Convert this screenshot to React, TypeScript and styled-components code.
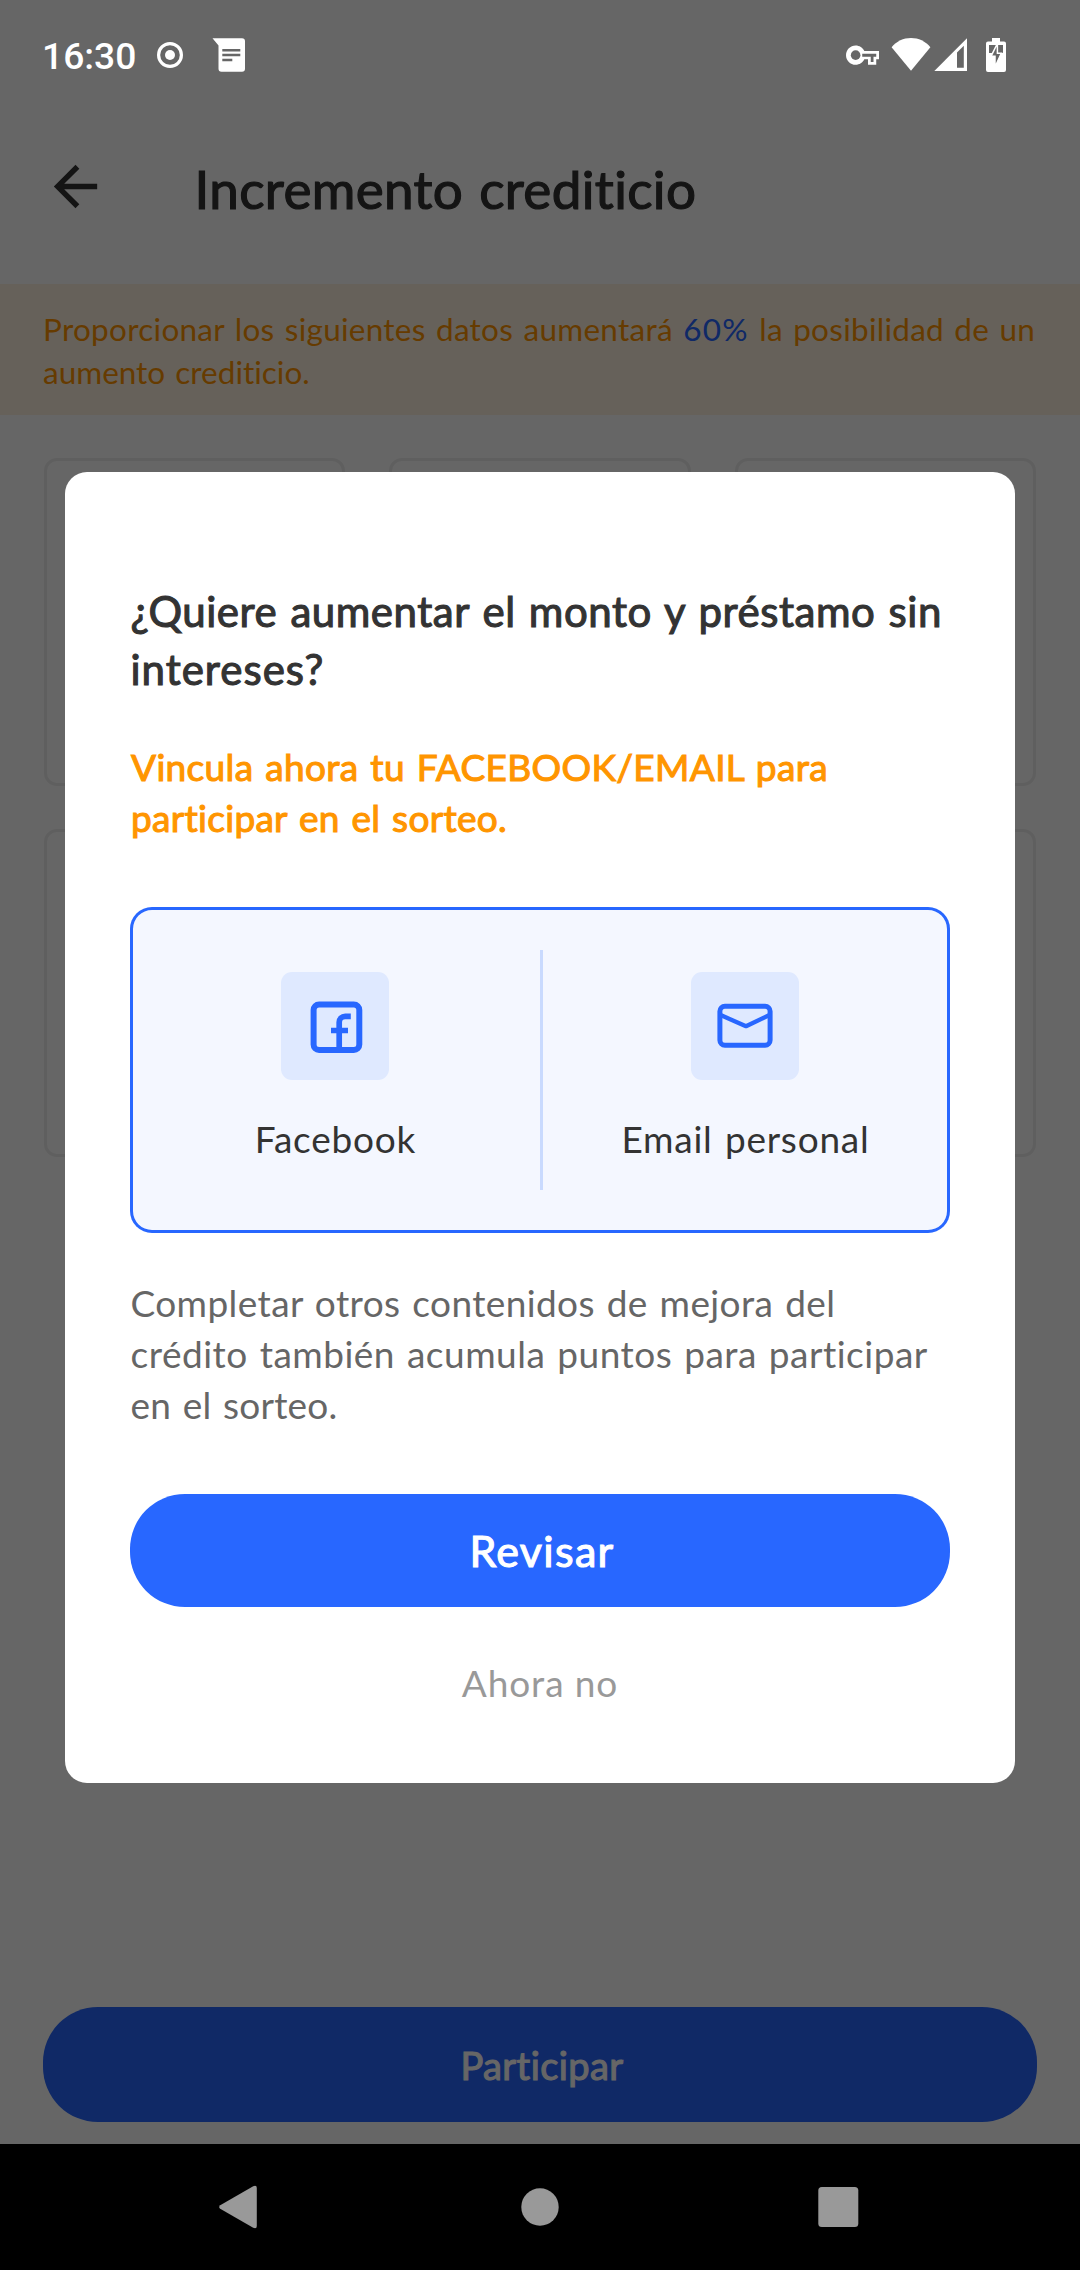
import React from "react";
import styled, { createGlobalStyle } from "styled-components";

const color = {
  ink: "#333333",
  body: "#666666",
  muted: "#999999",
  blue: "#2867ff",
  orange: "#ff9500",
  banner: "#fff3e2",
  line: "#eeeeee",
  panel: "#f4f7ff",
  tile: "#dfe9ff",
  divider: "#c9dafe",
  dim: "#666666",
};

const GlobalStyle = createGlobalStyle`
  * { box-sizing: border-box; }
  body { margin: 0; background: #000; }
  button { border: 0; padding: 0; font: inherit; }
`;

const Phone = styled.div`
  position: relative;
  display: flex;
  flex-direction: column;
  width: 1080px;
  height: 2270px;
  overflow: hidden;
  background: #fff;
  font-family: Lato, "Noto Sans", sans-serif;
  font-variant-ligatures: none;
  word-spacing: 2px;
`;

const Header = styled.header`
  display: flex;
  align-items: center;
  height: 191px;
  margin-top: 93px;
  padding-left: 43px;
`;

const BackIcon = styled.svg`
  width: 65px;
  height: 65px;
  margin: 0 86.5px 4px 0;
  fill: ${color.ink};
`;

const ScreenTitle = styled.h1`
  margin: 0;
  font-size: 53px;
  line-height: 64px;
  font-weight: 400;
  letter-spacing: 0.35px;
  color: ${color.ink};
  -webkit-text-stroke: 1.2px currentColor;
`;

const Banner = styled.div`
  height: 131px;
  padding: 24px 0 0 43px;
  background: ${color.banner};
  color: ${color.orange};
  font-size: 31.5px;
  line-height: 43px;
`;

const Line = styled.span<{ $track: number }>`
  display: block;
  white-space: nowrap;
  letter-spacing: ${(p) => p.$track}px;
`;

const Rate = styled.span`
  letter-spacing: 1.3px;
  color: ${color.blue};
`;

const CardGrid = styled.div`
  display: grid;
  grid-template-columns: repeat(3, 1fr);
  grid-auto-rows: 328px;
  gap: 43px 44px;
  padding: 43px 44px 0;
`;

const Card = styled.div`
  border: 3px solid ${color.line};
  border-radius: 13px;
`;

const PillButton = styled.button<{ $height: number; $size: number; $track: number }>`
  display: flex;
  align-items: center;
  justify-content: center;
  width: 100%;
  height: ${(p) => p.$height}px;
  padding: 1px 0 0 4px;
  border-radius: 55px;
  background: ${color.blue};
  color: #fff;
  font-size: ${(p) => p.$size}px;
  letter-spacing: ${(p) => p.$track}px;
  -webkit-text-stroke: 1.1px currentColor;
`;

const Footer = styled.footer`
  margin-top: auto;
  padding: 0 43px 22px;
`;

const NavBar = styled.nav`
  display: grid;
  grid-template-columns: repeat(3, 1fr);
  place-items: center;
  height: 126px;
  padding: 0 92px;
  background: #000;
`;

const NavIcon = styled.svg`
  width: 48px;
  height: 48px;
  fill: ${color.muted};
`;

const Scrim = styled.div`
  position: absolute;
  inset: 0 0 126px 0;
  padding: 472px 65px 0;
  background: rgba(0, 0, 0, 0.6);
`;

const StatusBar = styled.div`
  position: absolute;
  inset: 0 0 auto 0;
  display: flex;
  align-items: center;
  height: 110px;
  padding: 0 74px 0 42px;
`;

const Clock = styled.span`
  width: 113px;
  padding-top: 1px;
  font-family: Roboto, sans-serif;
  font-weight: 500;
  font-size: 37.2px;
  line-height: 44px;
  color: #fff;
`;

const StatusIcon = styled.svg<{ $w: number; $gap?: number }>`
  flex: none;
  width: ${(p) => p.$w}px;
  height: 36px;
  margin-left: ${(p) => p.$gap ?? 0}px;
  fill: #fff;
`;

const Spacer = styled.span`
  flex: 1;
`;

const Dialog = styled.section`
  display: flex;
  flex-direction: column;
  height: 1311px;
  padding: 110px 65px 0;
  border-radius: 22px;
  background: #fff;
`;

const Question = styled.h2`
  margin: 0;
  padding-left: 0.5px;
  font-size: 42px;
  line-height: 58px;
  font-weight: 400;
  color: ${color.ink};
  -webkit-text-stroke: 1.1px currentColor;
`;

const Highlight = styled.p`
  margin: 43px 0 0;
  padding-left: 1px;
  font-size: 37px;
  line-height: 51.3px;
  color: ${color.orange};
  -webkit-text-stroke: 1.1px currentColor;
`;

const Choices = styled.div`
  display: flex;
  height: 326px;
  margin-top: 63.4px;
  border-radius: 22px;
  background: ${color.panel};
  box-shadow: inset 0 0 0 3px ${color.blue};
`;

const Choice = styled.div`
  flex: 1;
  display: flex;
  flex-direction: column;
  align-items: center;
  padding-top: 65px;
`;

const Divider = styled.span`
  width: 3px;
  height: 240px;
  margin: 43px -3px 0 0;
  background: ${color.divider};
`;

const Tile = styled.svg`
  width: 108px;
  height: 108px;
  border-radius: 11px;
  background: ${color.tile};
  fill: none;
  stroke: ${color.blue};
`;

const ChoiceLabel = styled.span`
  margin-top: 33px;
  padding-left: 1px;
  font-size: 37px;
  line-height: 51px;
  letter-spacing: 0.78px;
  color: ${color.ink};
`;

const Note = styled.p`
  margin: 44px 0 63.4px;
  padding-left: 0.5px;
  font-size: 37px;
  line-height: 51.2px;
  color: ${color.body};
`;

const Dismiss = styled.button`
  margin-top: 50px;
  background: none;
  font-size: 37px;
  line-height: 51px;
  letter-spacing: 0.9px;
  color: ${color.muted};
`;

export default function App() {
  return (
    <>
      <GlobalStyle />
      <Phone>
        <Header>
          <BackIcon viewBox="0 0 24 24">
            <path d="M20 11H7.83l5.59-5.59L12 4l-8 8 8 8 1.41-1.41L7.83 13H20z" />
          </BackIcon>
          <ScreenTitle>Incremento crediticio</ScreenTitle>
        </Header>
        <Banner>
          <Line $track={0.27}>
            Proporcionar los siguientes datos aumentará <Rate>60%</Rate> la posibilidad de un
          </Line>
          <Line $track={0}>aumento crediticio.</Line>
        </Banner>
        <CardGrid>
          {[0, 1, 2, 3, 4, 5].map((n) => (
            <Card key={n} />
          ))}
        </CardGrid>
        <Footer>
          <PillButton $height={115} $size={38} $track={0.42}>
            Participar
          </PillButton>
        </Footer>
        <NavBar>
          <NavIcon viewBox="0 0 48 48">
            <path d="M3.2 22.2 36.2 3.2Q39.8 1.8 39.8 5V43Q39.8 46.2 36.2 44.8L3.2 25.8Q1.2 24 3.2 22.2Z" />
          </NavIcon>
          <NavIcon viewBox="0 0 48 48">
            <circle cx="24" cy="24" r="18.7" />
          </NavIcon>
          <NavIcon viewBox="0 0 48 48">
            <rect x="3.3" y="4" width="40" height="40" rx="3.5" />
          </NavIcon>
        </NavBar>

        <Scrim>
          <Dialog>
            <Question>
              <Line $track={0.53}>¿Quiere aumentar el monto y préstamo sin</Line>
              <Line $track={1}>intereses?</Line>
            </Question>
            <Highlight>
              <Line $track={0.34}>Vincula ahora tu FACEBOOK/EMAIL para</Line>
              <Line $track={0.3}>participar en el sorteo.</Line>
            </Highlight>
            <Choices>
              <Choice>
                <Tile viewBox="0 0 108 108">
                  <rect x="32.6" y="32.4" width="45.7" height="45.7" rx="5.5" strokeWidth="6" />
                  <path d="M58.2 78V50.3a6 6 0 0 1 6-6h5.6M50 58.5h17" strokeWidth="5.7" />
                </Tile>
                <ChoiceLabel>Facebook</ChoiceLabel>
              </Choice>
              <Divider />
              <Choice>
                <Tile viewBox="0 0 108 108">
                  <rect x="28.9" y="34.2" width="50.2" height="39" rx="5" strokeWidth="5" />
                  <path d="M29 42.8 55 54.2 79 42.8" strokeWidth="4.3" strokeLinejoin="round" />
                </Tile>
                <ChoiceLabel>Email personal</ChoiceLabel>
              </Choice>
            </Choices>
            <Note>
              <Line $track={0.39}>Completar otros contenidos de mejora del</Line>
              <Line $track={0.5}>crédito también acumula puntos para participar</Line>
              <Line $track={0.2}>en el sorteo.</Line>
            </Note>
            <PillButton $height={113} $size={43} $track={1.3}>
              Revisar
            </PillButton>
            <Dismiss>Ahora no</Dismiss>
          </Dialog>
        </Scrim>

        <StatusBar>
          <Clock>16:30</Clock>
          <StatusIcon viewBox="0 0 28 36" $w={28} $gap={1}>
            <circle cx="14" cy="18" r="11.4" fill="none" stroke="#fff" strokeWidth="3.2" />
            <circle cx="14" cy="18" r="5" />
          </StatusIcon>
          <StatusIcon viewBox="0 0 34 36" $w={34} $gap={28}>
            <path d="M.5 1.3H30a3 3 0 0 1 3 3V31.7a3 3 0 0 1-3 3H9.5a3 3 0 0 1-3-3V8.6Z" />
            <path d="M10.3 12h18v2.6h-18zM10.3 16.8h18v2.4h-18zM10.3 21.7h10v2.6h-10z" fill={color.dim} />
          </StatusIcon>
          <Spacer />
          <StatusIcon viewBox="0 -1.2 24 26.2" $w={33}>
            <path d="M22 19h-6v-4h-2.68c-1.14 2.42-3.6 4-6.32 4-3.86 0-7-3.14-7-7s3.14-7 7-7c2.72 0 5.17 1.58 6.32 4H24v6h-2z" />
            <circle cx="7" cy="12" r="3.5" fill={color.dim} />
            <path d="M11.8 11H22v2.2h-2v3.8h-2v-3.8h-6.2z" fill={color.dim} />
          </StatusIcon>
          <StatusIcon viewBox="0 0 40 36" $w={40} $gap={12}>
            <path d="M.6 10.2C5.6 4.2 12.3 1 20 1s14.4 3.2 19.4 9.2L20 33.8Z" />
          </StatusIcon>
          <StatusIcon viewBox="0 0 34 36" $w={34} $gap={3}>
            <path d="M.3 34 33 1.3V34Z" />
            <path d="M23 15.5 29.8 8.7V30.8H23Z" fill={color.dim} />
          </StatusIcon>
          <StatusIcon viewBox="0 0 20 36" $w={20} $gap={18}>
            <path d="M6 1h8v3.4h4a2 2 0 0 1 2 2V33a2 2 0 0 1-2 2H2a2 2 0 0 1-2-2V6.4a2 2 0 0 1 2-2h4Z" />
            <path d="M3 8h14v8H3z" fill={color.dim} />
            <path
              d="M11.4 6.5 5 19.3h4V30l6.3-13.7H11.4Z"
              fill={color.dim}
              stroke="#fff"
              strokeWidth="1.5"
            />
          </StatusIcon>
        </StatusBar>
      </Phone>
    </>
  );
}
